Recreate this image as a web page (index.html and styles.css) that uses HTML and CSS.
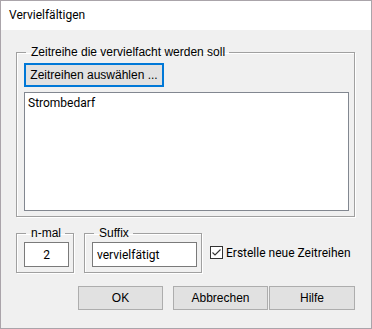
FILE: index.html
```html
<!DOCTYPE html>
<html lang="de">

<head>
  <meta charset="UTF-8">
  <title>Vervielfältigen</title>
  <link rel="stylesheet" href="styles.css">
</head>

<body>
  <div class="window">
    <div class="titlebar">Vervielfältigen</div>

    <div class="content">
      <!-- Series selection -->
      <fieldset class="group group-series">
        <legend>Zeitreihe die vervielfacht werden soll</legend>
        <button class="btn btn-select">Zeitreihen auswählen ...</button>
        <div class="listbox">
          <div class="list-item">Strombedarf</div>
        </div>
      </fieldset>

      <!-- Options -->
      <div class="options">
        <fieldset class="group group-small">
          <legend>n-mal</legend>
          <input class="textbox textbox-count" type="text" value="2">
        </fieldset>
        <fieldset class="group group-small">
          <legend>Suffix</legend>
          <input class="textbox textbox-suffix" type="text" value="vervielfätigt">
        </fieldset>
        <label class="check">
          <span class="checkbox">
            <svg width="11" height="11" viewBox="0 0 11 11">
              <polyline points="1.5,5.5 4,8 9.5,2.5" fill="none" stroke="#333" stroke-width="1.1"/>
            </svg>
          </span>
          Erstelle neue Zeitreihen
        </label>
      </div>

      <!-- Dialog buttons -->
      <div class="actions">
        <button class="btn btn-ok">OK</button>
        <button class="btn btn-cancel">Abbrechen</button>
        <button class="btn btn-help">Hilfe</button>
      </div>
    </div>
  </div>
</body>

</html>
```

FILE: styles.css
```css
html,
body {
  margin: 0;
  background-color: #f0f0f0;
}

.window {
  width: 372px;
  height: 329px;
  box-sizing: border-box;
  border: 1px solid #aaa4aa;
  background-color: #f0f0f0;
  font-family: "Liberation Sans", Arial, sans-serif;
  font-size: 12px;
  color: #000;
}

.titlebar {
  height: 29px;
  line-height: 29px;
  padding-left: 8px;
  background-color: #fff;
  font-family: Roboto, sans-serif;
  font-size: 12px;
}

.content {
  padding: 15px 0 0 15px;
}

/* Group boxes */
.group {
  margin: 0;
  padding: 0 4px 5px 7px;
  min-width: 0;
  border: 1px solid #a0a0a0;
  box-shadow: 1px 1px 0 #fff, inset 1px 1px 0 #fff;
}

.group legend {
  margin-left: 2px;
  padding: 0 4px 0 5px;
  line-height: 14px;
}

.group-series {
  width: 326px;
  padding-top: 4px;
}

.group-small {
  padding-top: 2px;
}

/* Buttons */
.btn {
  display: block;
  box-sizing: border-box;
  height: 24px;
  padding: 0;
  border: 1px solid #adadad;
  background-color: #e1e1e1;
  font-family: "Liberation Sans", Arial, sans-serif;
  font-size: 12px;
  color: #000;
}

.btn-select {
  width: 140px;
  border: 2px solid #0078d7;
}

.listbox {
  box-sizing: border-box;
  width: 325px;
  height: 119px;
  margin-top: 5px;
  padding: 3px 3px;
  border: 1px solid #828790;
  background-color: #fff;
  font-family: Roboto, sans-serif;
  font-size: 12px;
  line-height: 14px;
}

/* Options row */
.options {
  display: flex;
  align-items: center;
  gap: 10px;
  margin-top: 9px;
}

.textbox {
  display: block;
  box-sizing: border-box;
  height: 25px;
  margin: 0;
  padding: 0 4px;
  border: 1px solid #7a7a7a;
  background-color: #fff;
  font-family: Roboto, sans-serif;
  font-size: 12px;
  color: #000;
  outline: none;
}

.textbox-count {
  width: 45px;
  text-align: center;
}

.textbox-suffix {
  width: 105px;
}

.check {
  display: flex;
  align-items: center;
  gap: 3px;
  margin-top: 6px;
  margin-left: -2px;
  font-family: Roboto, sans-serif;
  font-size: 12px;
}

.checkbox {
  display: flex;
  align-items: center;
  justify-content: center;
  box-sizing: border-box;
  width: 13px;
  height: 13px;
  border: 1px solid #333;
  background-color: #fff;
}

/* Dialog buttons */
.actions {
  display: flex;
  margin-top: 13px;
  padding-left: 62px;
}

.btn-ok {
  width: 85px;
}

.btn-cancel {
  width: 95px;
  margin-left: 10px;
}

.btn-help {
  width: 86px;
  margin-left: 1px;
}
```
